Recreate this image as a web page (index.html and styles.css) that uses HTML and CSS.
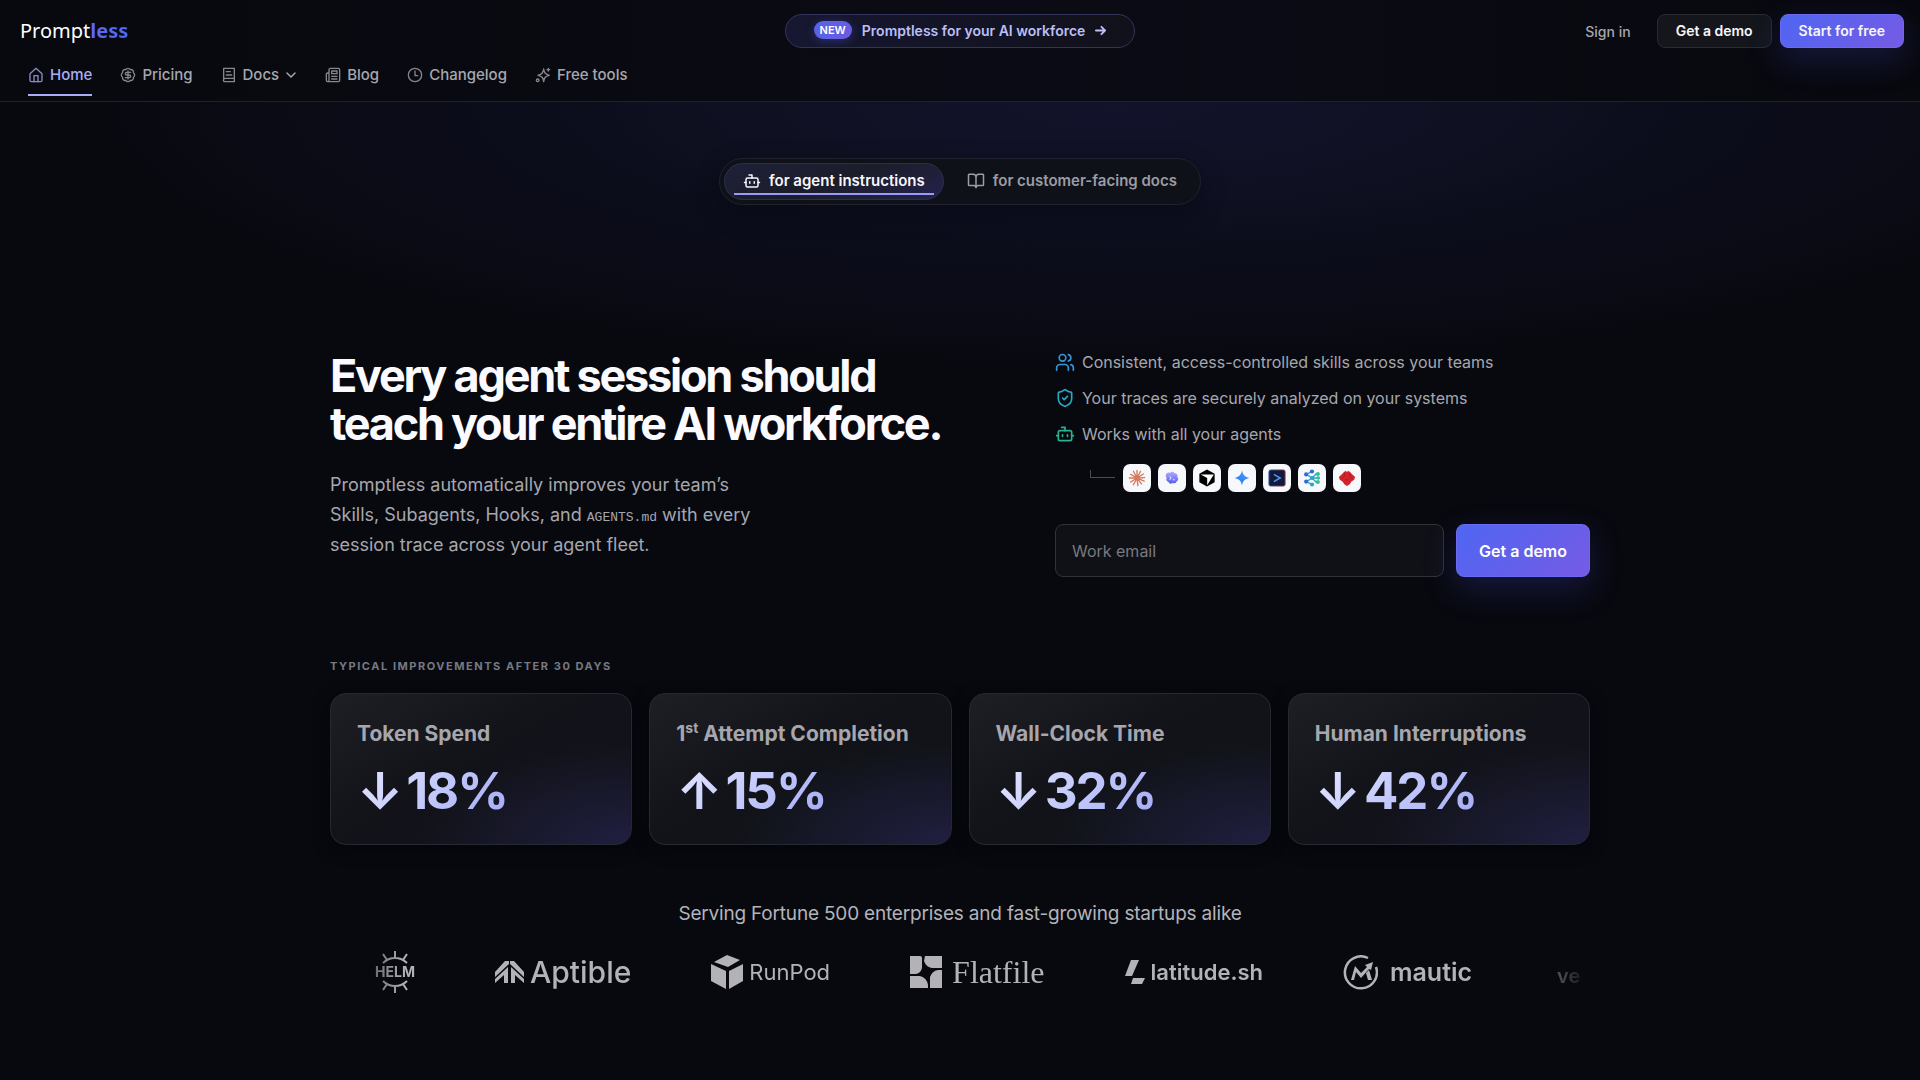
FILE: index.html
```html
<!DOCTYPE html>
<html lang="en">
<head>
  <meta charset="UTF-8" />
  <meta name="viewport" content="width=device-width, initial-scale=1.0"/>
  <title>Promptless</title>
  <link rel="stylesheet" href="styles.css">
</head>
<body>

  <header class="site-header">
    <div class="top-row">
      <a href="#" class="logo">Prompt<b>less</b></a>
      <a href="#" class="announcement">
        <span class="badge">NEW</span>
        <span>Promptless for your AI workforce</span>
        <svg class="arrow" viewBox="0 0 12 12"><path d="M1 6h10M7 2l4 4-4 4"/></svg>
      </a>
      <div class="actions">
        <a href="#" class="sign-in">Sign in</a>
        <button class="btn btn-dark">Get a demo</button>
        <button class="btn btn-primary">Start for free</button>
      </div>
    </div>
    <nav class="main-nav">
      <a href="#" class="active">
        <svg class="icon" viewBox="0 0 24 24"><path d="M3 10l9-8 9 8v10a2 2 0 0 1-2 2H5a2 2 0 0 1-2-2z"/><path d="M9 22v-9h6v9"/></svg>
        Home
      </a>
      <a href="#">
        <svg class="icon" viewBox="0 0 24 24"><path d="M3.85 8.62a4 4 0 0 1 4.78-4.77 4 4 0 0 1 6.74 0 4 4 0 0 1 4.78 4.78 4 4 0 0 1 0 6.74 4 4 0 0 1-4.77 4.78 4 4 0 0 1-6.75 0 4 4 0 0 1-4.78-4.77 4 4 0 0 1 0-6.76Z"/><path d="M16 8h-6a2 2 0 1 0 0 4h4a2 2 0 1 1 0 4H8M12 18V6"/></svg>
        Pricing
      </a>
      <a href="#">
        <svg class="icon" viewBox="0 0 24 24"><path d="M4 19V2h16v20H6a2 2 0 0 1-2-3 2 2 0 0 1 2-2h14M8 7h6M8 12h8"/></svg>
        Docs
        <svg class="chevron" viewBox="0 0 12 12"><path d="M2 4l4 4 4-4"/></svg>
      </a>
      <a href="#">
        <svg class="icon" viewBox="0 0 24 24"><path d="M4 22h16a2 2 0 0 0 2-2V4a2 2 0 0 0-2-2H8a2 2 0 0 0-2 2v16a2 2 0 0 1-2 2Zm0 0a2 2 0 0 1-2-2v-9c0-1.1.9-2 2-2h2"/><path d="M18 14h-8M18 18h-8M10 6h8v4h-8z"/></svg>
        Blog
      </a>
      <a href="#">
        <svg class="icon" viewBox="0 0 24 24"><circle cx="12" cy="12" r="10"/><path d="M12 6v7h4"/></svg>
        Changelog
      </a>
      <a href="#">
        <svg class="icon" viewBox="0 0 24 24"><path d="M13 3c1 6 2.500 8 8.500 9.500C15.500 14 14 15.500 13 22c-1-6.500-2.500-8-8.500-9.500C10.500 11 12 9 13 3ZM20 2v4M22 4h-4"/><circle cx="4" cy="20" r="2"/></svg>
        Free tools
      </a>
    </nav>
  </header>

  <main>
    <div class="switcher">
      <button class="switch selected">
        <svg class="icon" viewBox="0 0 24 24"><path d="M12 8V4H8"/><rect x="4" y="8" width="16" height="12" rx="2"/><path d="M2 14h2M20 14h2M15 13v2M9 13v2"/></svg>
        for agent instructions
      </button>
      <button class="switch">
        <svg class="icon" viewBox="0 0 24 24"><path d="M12 7v14M3 18a1 1 0 0 1-1-1V4a1 1 0 0 1 1-1h5a4 4 0 0 1 4 4 4 4 0 0 1 4-4h5a1 1 0 0 1 1 1v13a1 1 0 0 1-1 1h-6a3 3 0 0 0-3 3 3 3 0 0 0-3-3z"/></svg>
        for customer-facing docs
      </button>
    </div>

    <section class="hero">
      <div class="hero-copy">
        <h1>Every agent session should<br>teach your entire AI workforce.</h1>
        <p>Promptless automatically improves your team’s<br>Skills, Subagents, Hooks, and <code>AGENTS.md</code> with every<br>session trace across your agent fleet.</p>
      </div>
      <div class="hero-side">
        <ul class="features">
          <li>
            <svg class="icon blue" viewBox="0 0 24 24"><path d="M16 22v-3a4 4 0 0 0-4-4H6a4 4 0 0 0-4 4v3"/><circle cx="9" cy="7" r="4"/><path d="M22 22v-3a4 4 0 0 0-3-3.870M16 3.130a4 4 0 0 1 0 7.750"/></svg>
            Consistent, access-controlled skills across your teams
          </li>
          <li>
            <svg class="icon cyan" viewBox="0 0 24 24"><path d="M20 13c0 5-3.500 7.500-7.660 8.950a1 1 0 0 1-.67-.01C7.500 20.500 4 18 4 13V6a1 1 0 0 1 1-1c2 0 4.500-1.200 6.240-2.720a1.170 1.170 0 0 1 1.520 0C14.510 3.810 17 5 19 5a1 1 0 0 1 1 1z"/><path d="m9 12 2 2 4-4"/></svg>
            Your traces are securely analyzed on your systems
          </li>
          <li>
            <svg class="icon green" viewBox="0 0 24 24"><path d="M12 8V4H8"/><rect x="4" y="8" width="16" height="12" rx="2"/><path d="M2 14h2M20 14h2M15 13v2M9 13v2"/></svg>
            Works with all your agents
          </li>
        </ul>
        <div class="agents">
          <span class="branch"></span>
          <span class="tile">
            <svg viewBox="0 0 20 20" stroke="#d97757" stroke-width="1.500" stroke-linecap="round"><path d="M10 10V1.500M10 10l4-7.500M10 10l7-4.500M10 10l8.500-.5M10 10l8 3.500M10 10l5 6.500M10 10l1 8.500M10 10l-4 7.500M10 10l-7 4.500M10 10H1.500M10 10L3 6M10 10L6 2.500"/></svg>
          </span>
          <span class="tile">
            <svg viewBox="0 0 20 20"><defs><linearGradient id="codex" x2="0" y2="1"><stop stop-color="#b1a7ff"/><stop offset="1" stop-color="#5360ee"/></linearGradient></defs><path fill="url(#codex)" d="M8 4.200a3.500 3.500 0 0 1 5 .6 3 3 0 0 1 3 4 3.500 3.500 0 0 1-.8 5 3.500 3.500 0 0 1-4.400 1.800 3.500 3.500 0 0 1-5-1.300 3.200 3.200 0 0 1-1.800-4.500A3.500 3.500 0 0 1 8 4.200Z"/><path d="M7.500 8l1.500 2-1.500 2M11 12h2" fill="none" stroke="#fff"/></svg>
          </span>
          <span class="tile">
            <svg viewBox="0 0 20 20"><path d="M10 .5l8.500 4.800v9.400L10 19.500l-8.500-4.800V5.300z"/><path fill="#fff" d="M3 6h14.500L10.200 18v-8z"/></svg>
          </span>
          <span class="tile">
            <svg viewBox="0 0 20 20"><defs><linearGradient id="gemini" x1="0" y1="1" x2="1" y2="0"><stop stop-color="#1976f5"/><stop offset="1" stop-color="#5a9cf6"/></linearGradient></defs><path fill="url(#gemini)" d="M10 1.800c1 4.900 3.300 7.200 8.200 8.200-4.900 1-7.200 3.300-8.200 8.200-1-4.900-3.300-7.200-8.200-8.200 4.900-1 7.200-3.300 8.200-8.200Z"/></svg>
          </span>
          <span class="tile">
            <svg viewBox="0 0 20 20"><defs><linearGradient id="shell" x2="1" y2="0"><stop stop-color="#4265b5"/><stop offset="1" stop-color="#a92e48"/></linearGradient></defs><rect x="1" y="1" width="18" height="18" rx="2" fill="#111b37" stroke="url(#shell)"/><path d="M6.500 6l7 4-7 4" fill="none" stroke="#5090f7" stroke-width="1.800"/></svg>
          </span>
          <span class="tile">
            <svg viewBox="0 0 20 20"><path d="M10 2.500L4 6M4 6l6 4M10 10l-6 4M4 14l6 3.500M10 10h6.500M10 10l5-5M10 10l5 5" fill="none" stroke="#2ca6c4" stroke-width="1.500"/><g fill="#3467d6"><circle cx="10" cy="2.800" r="2.300"/><circle cx="3.500" cy="6" r="2.300"/><circle cx="3.500" cy="14" r="2.300"/></g><g fill="#2aa5c5"><circle cx="10" cy="10" r="2.300"/><circle cx="10" cy="17.200" r="2.300"/></g><g fill="#2cc09a"><circle cx="16.500" cy="5.500" r="2.300"/><circle cx="17" cy="10" r="2"/><circle cx="16.500" cy="14.500" r="2.300"/></g></svg>
          </span>
          <span class="tile">
            <svg viewBox="0 0 20 20"><path fill="#d3232d" d="M7 3l2-1 1 2 1-2 2 1 3 3 3 3-1 3-3 2-2 3-3 2-3-2-2-3-3-2-1-3 3-3z"/><path d="M7 4v4l-3 3M13 4v4l3 3M8 12h4" fill="none" stroke="#a81d28"/></svg>
          </span>
        </div>
        <form class="demo-form">
          <input type="email" placeholder="Work email" aria-label="Work email">
          <button type="button" class="btn-demo">Get a demo</button>
        </form>
      </div>
    </section>

    <section class="stats">
      <h2>Typical improvements after 30 days</h2>
      <div class="cards">
        <div class="card">
          <h3>Token Spend</h3>
          <p class="value"><span>↓</span>18%</p>
        </div>
        <div class="card">
          <h3>1<sup>st</sup> Attempt Completion</h3>
          <p class="value"><span>↑</span>15%</p>
        </div>
        <div class="card">
          <h3>Wall-Clock Time</h3>
          <p class="value"><span>↓</span>32%</p>
        </div>
        <div class="card">
          <h3>Human Interruptions</h3>
          <p class="value"><span>↓</span>42%</p>
        </div>
      </div>
    </section>

    <section class="customers">
      <p>Serving Fortune 500 enterprises and fast-growing startups alike</p>
      <div class="logos">
        <div class="brand helm">
          <svg viewBox="0 0 40 14"><path d="M8 13a17 17 0 0 1 24 0M20 8V1M12 10L8 4M28 10l4-6"/></svg>
          <span>HELM</span>
          <svg viewBox="0 0 40 14"><path d="M8 1a17 17 0 0 0 24 0M20 6v7M12 4l-4 6M28 4l4 6"/></svg>
        </div>
        <div class="brand aptible">
          <svg width="29" height="24" viewBox="0 0 29 24"><path d="M0 12L10 1h4v3L0 17zM29 12L19 1h-4v3l14 13zM0 23v-4L13 7v16H9v-8zM29 23v-4L16 7v16h4v-8z"/></svg>
          <span>Aptible</span>
        </div>
        <div class="brand runpod">
          <svg width="32" height="34" viewBox="0 0 32 34"><path d="M16 0l13 5-12 7L3 7zM0 9l15 7v18L0 26zM32 9v17l-14 8V16z"/></svg>
          <span>RunPod</span>
        </div>
        <div class="brand flatfile">
          <svg width="32" height="32" viewBox="0 0 32 32"><path d="M0 0h10q2 0 2 2v10q-1 5-6 6H0zM15 0h17v12H22q-6-1-8-7zM0 20h10q7 2 8 9v3H0zM32 14v18H20V21q2-6 8-7z"/></svg>
          <span>Flatfile</span>
        </div>
        <div class="brand latitude">
          <svg width="20" height="24" viewBox="0 0 20 24"><path d="M6 0h8L7 16H0zM8 18h12l-3 6H6z"/></svg>
          <span>latitude.sh</span>
        </div>
        <div class="brand mautic">
          <svg width="35" height="35" viewBox="0 0 35 35"><path class="ring" d="M25 3a16 16 0 1 0 8 9"/><path d="M8 25l4-14 6 7 6-6-2-2 8-3-2 8-2-1-8 9-5-6-2 8zM23 18l3-3 3 10h-4z"/></svg>
          <span>mautic</span>
        </div>
        <div class="brand vellum"><span>ve</span></div>
      </div>
    </section>
  </main>

</body>
</html>
```
FILE: styles.css
```css
* {
  box-sizing: border-box;
}

body {
  margin: 0;
  min-height: 100vh;
  font-family: Inter, sans-serif;
  background: #08090f;
  color: #a6a7ae;
  overflow-x: hidden;
}

a {
  color: inherit;
  text-decoration: none;
}

button, input {
  font-family: inherit;
}

svg {
  display: block;
  flex: none;
}

.icon, .arrow, .chevron {
  fill: none;
  stroke: currentColor;
  stroke-width: 2;
  stroke-linecap: round;
  stroke-linejoin: round;
}

.icon {
  width: 16px;
  height: 16px;
}

/* header */
.site-header {
  border-bottom: 1px solid #20222b;
  background: linear-gradient(90deg, #08090e, #0a0b14 60%, #08090e);
}

.top-row {
  display: grid;
  grid-template-columns: 1fr auto 1fr;
  align-items: center;
  padding: 14px 16px 0;
}

.logo {
  padding-left: 4px;
  font-family: "Noto Sans", sans-serif;
  font-size: 20px;
  line-height: 34px;
  color: #fff;
}

.logo b {
  background: linear-gradient(90deg, #6366f1, #4b6bf5);
  background-clip: text;
  color: transparent;
}

.announcement {
  display: flex;
  align-items: center;
  gap: 10px;
  height: 34px;
  padding: 0 28px 2px;
  border: 1px solid #32345a;
  border-radius: 17px;
  background: linear-gradient(90deg, #161731, #101119);
  color: #bbbff5;
  font-size: 14px;
  font-weight: 600;
}

.badge {
  padding: 0 6px;
  border-radius: 9px;
  background: linear-gradient(90deg, #5663e8, #6b5be3);
  box-shadow: 0 2px 10px #4b4fcf66;
  color: #fff;
  font-size: 11px;
  font-weight: 600;
  line-height: 18px;
}

.arrow {
  width: 11px;
  height: 11px;
}

.actions {
  display: flex;
  justify-content: flex-end;
  align-items: center;
  gap: 8px;
  font-size: 14px;
}

.sign-in {
  margin-right: 18px;
  font-weight: 500;
}

.btn {
  height: 34px;
  padding: 0 18px 2px;
  border: 1px solid #292b33;
  border-radius: 8px;
  color: #f6f6fa;
  font-size: 14px;
  font-weight: 600;
}

.btn-dark {
  background: #14161c;
}

.btn-primary, .btn-demo {
  border: 1px solid #6b6af0;
  background: linear-gradient(135deg, #4f66f2, #755be5);
  box-shadow: 0 12px 32px #3f43c544;
}

.main-nav {
  display: flex;
  gap: 28px;
  padding: 11px 28px 5px;
  font-size: 15px;
  font-weight: 500;
}

.main-nav a {
  display: flex;
  align-items: center;
  gap: 6px;
  height: 37px;
  padding-bottom: 4px;
  border-bottom: 2px solid transparent;
}

.main-nav .icon {
  opacity: .8;
}

.main-nav .active {
  border-color: #a9adf9;
  color: #a9adf9;
}

.chevron {
  width: 12px;
  height: 12px;
  stroke-width: 1.5;
}

/* hero */
main {
  padding: 56px 24px 80px;
  background: radial-gradient(ellipse 1040px 270px at 58% 0, #13142c, #0d0e1d 50%, #08090f00);
}

.switcher {
  display: flex;
  gap: 4px;
  width: fit-content;
  margin: 0 auto;
  padding: 4px;
  border: 1px solid #20222c;
  border-radius: 24px;
  background: #0f1118;
  box-shadow: 0 8px 24px #05060c66;
}

.switch {
  position: relative;
  display: flex;
  align-items: center;
  gap: 8px;
  height: 37px;
  padding: 0 18px 2px;
  border: 1px solid transparent;
  border-radius: 19px;
  background: none;
  color: #9b9ca6;
  font-size: 15px;
  font-weight: 600;
}

.switch .icon {
  width: 18px;
  height: 18px;
}

.selected {
  border-color: #2d2f46;
  background: linear-gradient(160deg, #1d2039, #1c1d2a 50%, #23224c);
  color: #f6f6fb;
}

.selected::after {
  content: "";
  position: absolute;
  right: 9px;
  bottom: 4px;
  left: 9px;
  height: 2px;
  background: #9b9bf4;
}

.hero, .stats, .customers {
  max-width: 1260px;
  margin: 0 auto;
}

.hero {
  display: grid;
  grid-template-columns: 21fr 17fr;
  gap: 64px;
  padding-top: 145px;
}

h1 {
  margin: 2px 0 0;
  color: #fafaff;
  font-size: 45px;
  font-weight: 700;
  letter-spacing: -0.05em;
  line-height: 48px;
}

.hero-copy p {
  margin: 22px 0 0;
  font-size: 18px;
  line-height: 30px;
}

code {
  font-family: "Liberation Mono", monospace;
  font-size: 13px;
  line-height: 1;
}

.features {
  display: grid;
  gap: 12px;
  margin: 0;
  padding: 0;
  list-style: none;
  font-size: 16px;
  line-height: 24px;
}

.features li {
  display: flex;
  align-items: center;
  gap: 7px;
}

.features .icon {
  width: 20px;
  height: 20px;
}

.blue { color: #3a94d4; }
.cyan { color: #26a9c2; }
.green { color: #2bb191; }

.agents {
  display: flex;
  gap: 7px;
  margin: 18px 0 32px 35px;
}

.branch {
  width: 25px;
  height: 8px;
  margin: 6px 1px 0 0;
  border-bottom: 1px solid #4a4c54;
  border-left: 1px solid #4a4c54;
}

.tile {
  display: grid;
  place-items: center;
  width: 28px;
  height: 28px;
  border-radius: 7px;
  background: #f7f8fc;
}

.tile svg {
  width: 18px;
  height: 18px;
}

.demo-form {
  display: flex;
  gap: 12px;
}

.demo-form input {
  flex: 1;
  min-width: 0;
  height: 53px;
  padding: 0 16px;
  border: 1px solid #30323b;
  border-radius: 8px;
  background: #101117;
  color: #fff;
  font-size: 16px;
}

.demo-form input::placeholder {
  color: #787a82;
}

.btn-demo {
  padding: 0 22px;
  border-radius: 8px;
  color: #fff;
  font-size: 16px;
  font-weight: 600;
}

/* stats */
.stats {
  padding-top: 81px;
}

h2 {
  margin: 0 0 19px;
  color: #777982;
  font-size: 11px;
  font-weight: 700;
  letter-spacing: 0.14em;
  line-height: 16px;
  text-transform: uppercase;
}

.cards {
  display: grid;
  grid-template-columns: repeat(4, 1fr);
  gap: 17px;
}

.card {
  padding: 26px 26px 22px;
  border: 1px solid #262832;
  border-radius: 16px;
  background:
    radial-gradient(ellipse 70% 65% at 100% 100%, #201f40, #16182800),
    linear-gradient(150deg, #1e1f25, #121319 45%, #11131b);
  box-shadow: 0 4px 16px #04050b;
}

h3 {
  margin: 0;
  font-size: 21px;
  font-weight: 700;
  line-height: 28px;
}

h3 sup {
  font-size: 14px;
  line-height: 0;
}

.value {
  width: fit-content;
  margin: 12px 0 0;
  background: linear-gradient(135deg, #e6e8ff, #bcc3fa 60%, #a3aaf6);
  background-clip: text;
  color: transparent;
  font-size: 51px;
  font-weight: 700;
  letter-spacing: -0.04em;
  line-height: 62px;
}

.value span {
  margin-right: 5px;
}

/* customers */
.customers {
  padding-top: 55px;
}

.customers p {
  margin: 0 0 20px;
  color: #b3b4bb;
  font-size: 19px;
  letter-spacing: -0.01em;
  line-height: 28px;
  text-align: center;
}

.logos {
  display: flex;
  align-items: center;
  gap: 80px;
  height: 48px;
  padding-left: 45px;
  overflow: hidden;
  mask-image: linear-gradient(90deg, transparent, #000 6%, #000 94%, transparent);
}

.brand {
  display: flex;
  flex: none;
  align-items: center;
  gap: 6px;
  color: #b3b3b7;
}

.brand svg {
  fill: #b3b3b7;
}

.helm {
  flex-direction: column;
  gap: 1px;
  font-size: 14px;
  font-weight: 700;
  line-height: 14px;
}

.helm svg {
  width: 40px;
  height: 14px;
  fill: none;
  stroke: #b3b3b7;
  stroke-width: 2;
}

.aptible {
  font-size: 30px;
  font-weight: 500;
}

.runpod {
  font-size: 22px;
}

.flatfile {
  gap: 10px;
  font-family: "Liberation Serif", serif;
  font-size: 32px;
}

.latitude {
  font-size: 22px;
  font-weight: 600;
}

.mautic {
  gap: 12px;
  font-size: 25px;
  font-weight: 600;
}

.mautic .ring {
  fill: none;
  stroke: #b3b3b7;
  stroke-width: 2.5;
}

.vellum {
  padding: 8px 0 0 5px;
  font-size: 20px;
  font-weight: 600;
}
```
